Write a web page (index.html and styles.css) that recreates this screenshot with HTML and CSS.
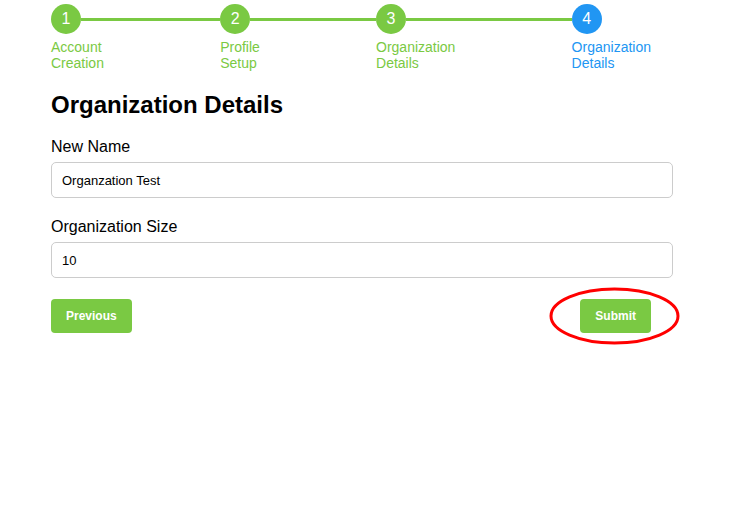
FILE: index.html
```html
<!DOCTYPE html>
<html>
<head>
<meta charset="utf-8">
<link rel="stylesheet" href="styles.css">
</head>
<body>
<div class="page">
  <div class="stepper">
    <div class="step done">
      <div class="step-top"><span class="dot">1</span><span class="line"></span></div>
      <div class="step-label">Account<br>Creation</div>
    </div>
    <div class="step done">
      <div class="step-top"><span class="dot">2</span><span class="line"></span></div>
      <div class="step-label">Profile<br>Setup</div>
    </div>
    <div class="step done">
      <div class="step-top"><span class="dot">3</span><span class="line"></span></div>
      <div class="step-label">Organization<br>Details</div>
    </div>
    <div class="step current last">
      <div class="step-top"><span class="dot">4</span></div>
      <div class="step-label">Organization<br>Details</div>
    </div>
  </div>

  <h2 class="title">Organization Details</h2>

  <div class="field">
    <label class="field-label">New Name</label>
    <input class="field-input" type="text" value="Organzation Test">
  </div>
  <div class="field">
    <label class="field-label">Organization Size</label>
    <input class="field-input" type="text" value="10">
  </div>

  <div class="actions">
    <button class="btn">Previous</button>
    <div class="submit-wrap">
      <button class="btn">Submit</button>
      <svg class="highlight" width="131" height="58" viewBox="0 0 131 58">
        <ellipse cx="65.5" cy="29" rx="63.5" ry="27" fill="none" stroke="#f00" stroke-width="3"/>
      </svg>
    </div>
  </div>
</div>
</body>
</html>
```

FILE: styles.css
```css
* { box-sizing: border-box; }
html, body { margin: 0; padding: 0; background: #fff; }
body { font-family: "Liberation Sans", Arial, sans-serif; color: #000; }

.page {
  width: 622px;
  margin-left: 51px;
  padding-top: 4px;
  padding-bottom: 120px;
}

.stepper {
  display: flex;
  margin-right: 22px;
}
.step { flex: 1 1 auto; display: flex; flex-direction: column; }
.step.last { flex: 0 0 auto; }
.step-top { display: flex; align-items: center; height: 30px; }
.dot {
  width: 30px; height: 30px; border-radius: 50%;
  flex: 0 0 30px;
  display: flex; align-items: center; justify-content: center;
  color: #fff; font-size: 16px;
  background: #7ac943;
}
.line { flex: 1; height: 3px; background: #7ac943; }
.step-label {
  margin-top: 5px;
  font-size: 14px;
  line-height: 16px;
  color: #7ac943;
  white-space: nowrap;
}
.step.current .dot { background: #2196f3; }
.step.current .step-label { color: #2196f3; }

.title {
  font-size: 24px;
  font-weight: bold;
  margin: 20px 0 19px;
  line-height: 28px;
}

.field { margin-bottom: 20px; display: flex; flex-direction: column; }
.field-label { font-size: 16px; line-height: 18px; margin-bottom: 6px; }
.field-input {
  height: 36px;
  width: 100%;
  border: 1px solid #ccc;
  border-radius: 5px;
  padding: 0 10px;
  font-family: "Liberation Sans", Arial, sans-serif;
  font-size: 13px;
  color: #000;
  outline: none;
}

.actions {
  display: flex;
  justify-content: space-between;
  align-items: center;
  margin-top: 21px;
}
.btn {
  height: 34px;
  padding: 0 15px;
  border: none;
  border-radius: 4px;
  background: #7ac943;
  color: #fff;
  font-family: "Liberation Sans", Arial, sans-serif;
  font-size: 12px;
  font-weight: bold;
}
.submit-wrap { position: relative; margin-right: 22px; display: flex; }
.highlight {
  position: absolute;
  left: -31px;
  top: -12px;
  pointer-events: none;
}
```
